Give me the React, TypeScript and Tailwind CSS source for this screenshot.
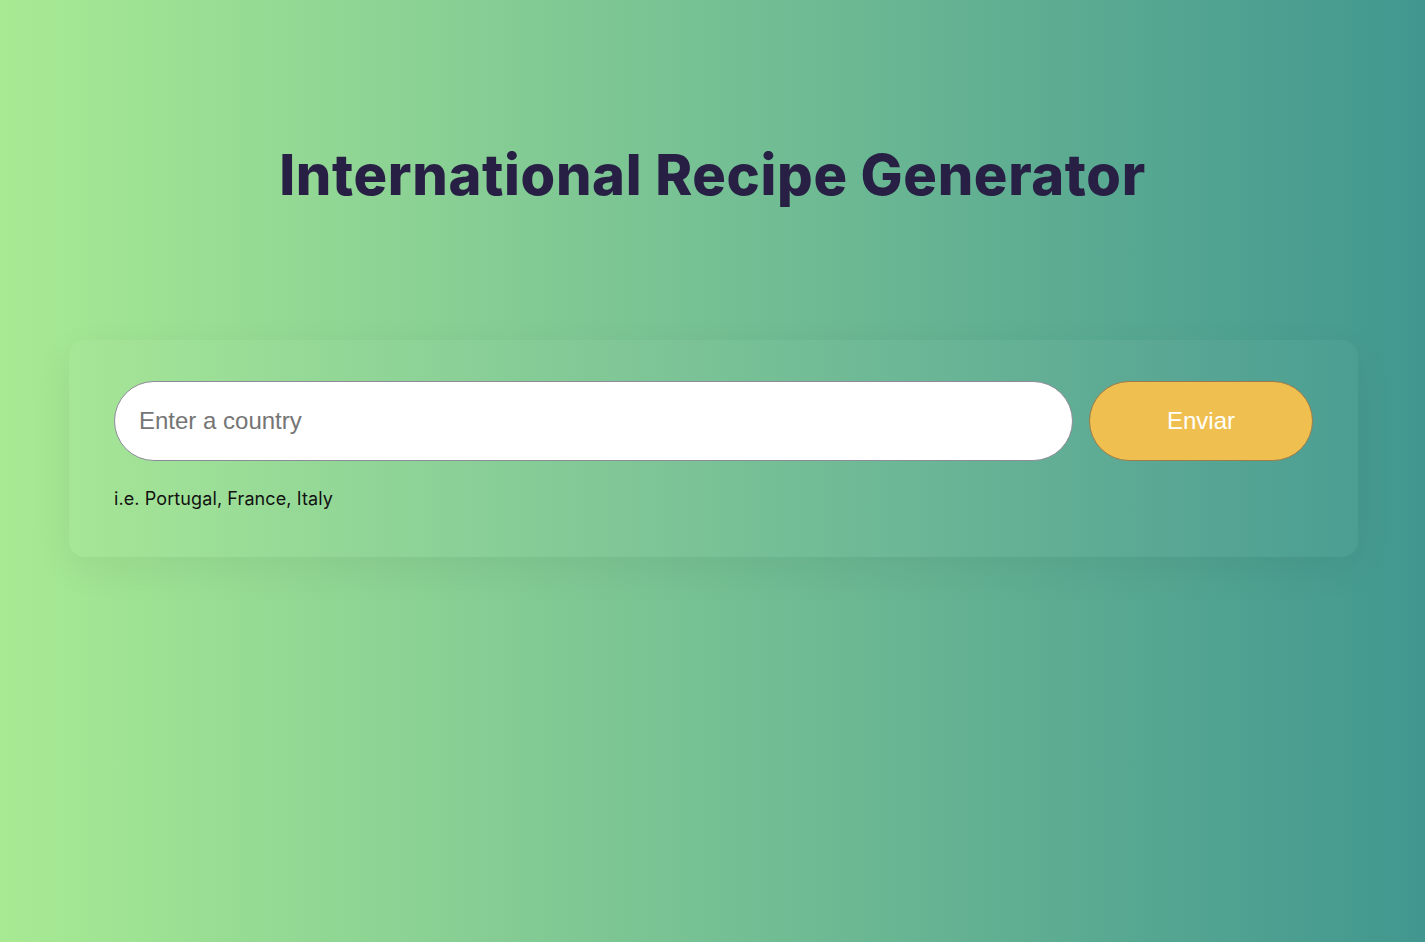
import React from 'react';

const App: React.FC = () => {
  return (
    <div className="min-h-[942px] w-full bg-gradient-to-r from-[#a8ea93] to-[#41978f] font-['Inter','Noto_Sans',sans-serif]">
      <div className="flex flex-col items-center pt-[142px]">
        <h1 className="text-[56px] leading-[67px] font-extrabold text-[#281f44] tracking-[0.65px]">
          International Recipe Generator
        </h1>
      </div>

      {/* search card */}
      <div className="ml-[69px] mr-[67px] mt-[131px] rounded-2xl bg-white/[0.03] shadow-[0_12px_40px_rgba(0,0,0,0.06)] px-[45px] pt-[41px] pb-[45px]">
        <form className="flex gap-4" onSubmit={(e) => e.preventDefault()}>
          <input
            type="text"
            placeholder="Enter a country"
            className="flex-1 h-[80px] rounded-full bg-white border border-[#8e8b99] px-6 text-[24px] font-['Liberation_Sans',Arial,sans-serif] placeholder:text-[#757575] outline-none"
          />
          <button
            type="submit"
            className="w-[224px] h-[80px] rounded-full bg-[#efbf50] border border-[#9c7c4c] text-white text-[24px] font-['Liberation_Sans',Arial,sans-serif]"
          >
            Enviar
          </button>
        </form>
        <p className="mt-[24px] text-[18px] leading-[27px] tracking-[0.1px] text-[#111]">i.e. Portugal, France, Italy</p>
      </div>
    </div>
  );
};

export default App;
